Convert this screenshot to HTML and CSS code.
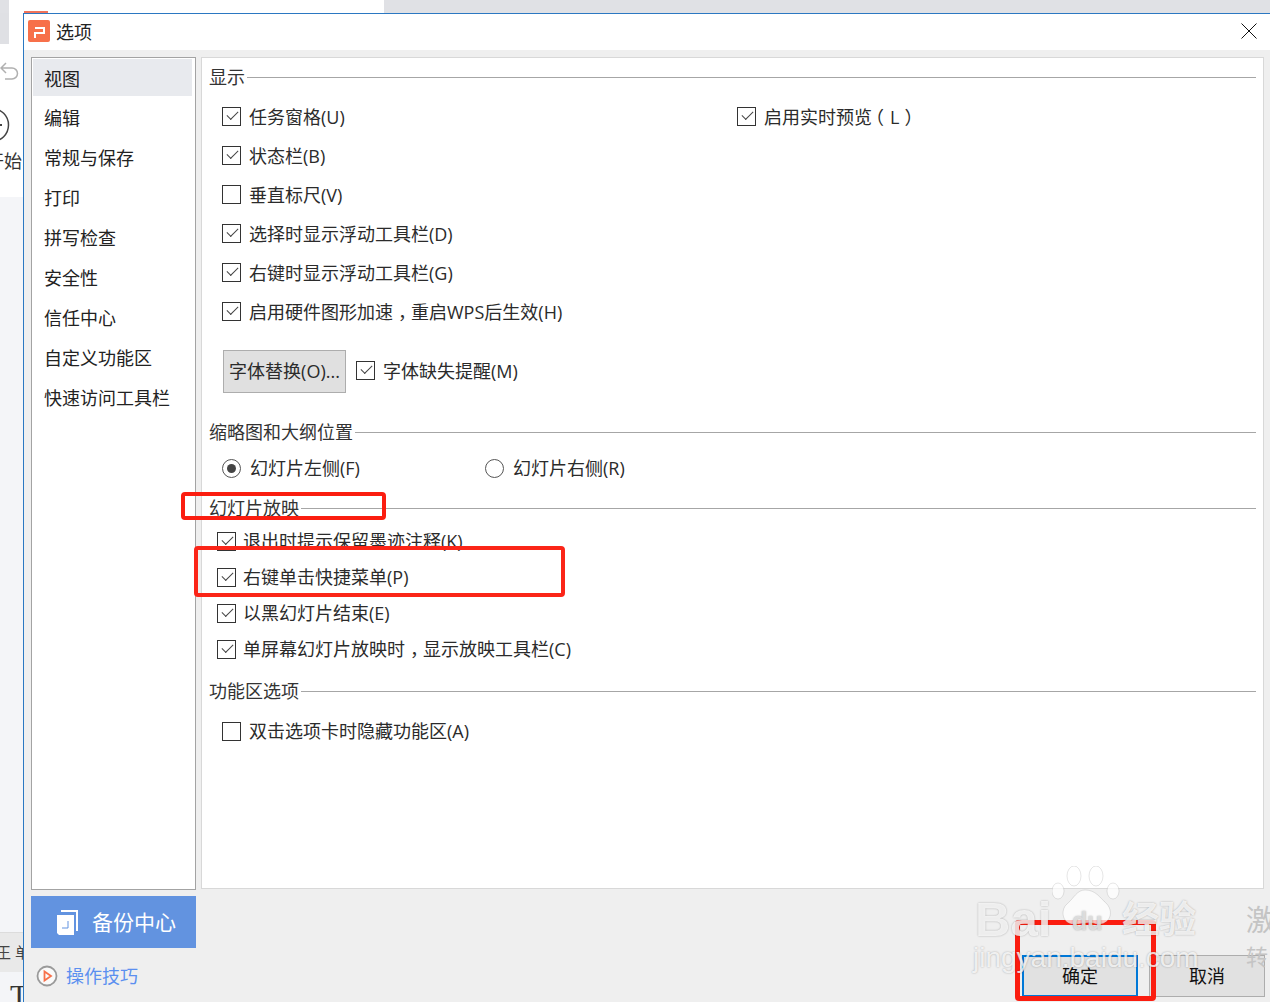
FILE: index.html
```html
<!DOCTYPE html>
<html lang="zh">
<head>
<meta charset="utf-8">
<title>选项</title>
<link rel="stylesheet" href="styles.css">
</head>
<body>
<div class="app">
  <div class="app-top"><span class="app-grey"></span><span class="app-tab"><i class="app-tab-mark"></i></span><span class="app-white"></span></div>
  <div class="app-page"></div>
  <svg class="undo" width="20" height="22" viewBox="0 0 20 22"><path d="M6 2 1 7l5 5M1 7h11a5.500 5.500 0 0 1 0 11H5" fill="none" stroke="#b0b0b0" stroke-width="1.500"/></svg>
  <svg class="play-ring" width="12" height="34" viewBox="0 0 12 34"><circle cx="-8" cy="17" r="16.500" fill="none" stroke="#444" stroke-width="1.500"/><rect x="0" y="16" width="2" height="2" fill="#444"/></svg>
  <div class="start">开始</div>
  <div class="app-band"></div>
  <div class="app-tools">王 单</div>
  <div class="app-t">T</div>
</div>

<section class="dialog">
  <header class="titlebar">
    <svg class="logo" width="22" height="22" viewBox="0 0 22 22"><rect width="22" height="22" rx="2" fill="#f7704a"/><path d="M7 8h9v5H7v5" fill="none" stroke="#fff" stroke-width="2"/></svg>
    <span class="title">选项</span>
    <svg class="close" width="16" height="16" viewBox="0 0 16 16"><path d="M.5.500l15 15M15.500.500l-15 15" stroke="#111" stroke-width="1"/></svg>
  </header>
  <div class="body">
    <aside class="side">
      <nav class="nav">
        <div class="nav-item active">视图</div>
        <div class="nav-item">编辑</div>
        <div class="nav-item">常规与保存</div>
        <div class="nav-item">打印</div>
        <div class="nav-item">拼写检查</div>
        <div class="nav-item">安全性</div>
        <div class="nav-item">信任中心</div>
        <div class="nav-item">自定义功能区</div>
        <div class="nav-item">快速访问工具栏</div>
      </nav>
      <div class="backup">
        <svg width="22" height="26" viewBox="0 0 22 26"><path d="M4 1h17v21h-2V3H4z" fill="#fff"/><path d="M0 6h17v20H2l-2-2z" fill="#fff"/><path d="M11 12v7H5" fill="none" stroke="#6293e0" stroke-width="1"/></svg>
        <span class="backup-text">备份中心</span>
      </div>
      <div class="tips">
        <svg width="22" height="22" viewBox="0 0 22 22"><circle cx="11" cy="11" r="9.500" fill="#fafafa" stroke="#9a9a9a" stroke-width="1.800"/><path d="M8.500 6.500 15 11l-6.500 4.500z" fill="none" stroke="#f7704a" stroke-width="1.800"/></svg>
        <span>操作技巧</span>
      </div>
    </aside>
    <main class="panel">
      <div class="legend legend-first"><span>显示</span></div>
      <div class="columns">
        <div class="col-main">
          <label class="row"><i class="box on"></i>任务窗格(U)</label>
          <label class="row"><i class="box on"></i>状态栏(B)</label>
          <label class="row"><i class="box"></i>垂直标尺(V)</label>
          <label class="row"><i class="box on"></i>选择时显示浮动工具栏(D)</label>
          <label class="row"><i class="box on"></i>右键时显示浮动工具栏(G)</label>
          <label class="row"><i class="box on"></i><span>启用硬件图形加速<span class="comma">，</span>重启WPS后生效(H)</span></label>
        </div>
        <div class="col-side">
          <label class="row"><i class="box on"></i><span>启用实时预览<span class="par-l">（</span><span class="par-m">L</span><span class="par-r">）</span></span></label>
        </div>
      </div>
      <div class="font-row">
        <button class="font-btn">字体替换(O)...</button>
        <label class="row"><i class="box on"></i>字体缺失提醒(M)</label>
      </div>
      <div class="legend legend-thumb"><span>缩略图和大纲位置</span></div>
      <div class="radios">
        <label class="radio"><i class="dot on"></i>幻灯片左侧(F)</label>
        <label class="radio"><i class="dot"></i>幻灯片右侧(R)</label>
      </div>
      <div class="legend legend-show"><span>幻灯片放映</span></div>
      <div class="show-list">
        <label class="row tight"><i class="box on"></i>退出时提示保留墨迹注释(K)</label>
        <label class="row tight"><i class="box on"></i>右键单击快捷菜单(P)</label>
        <label class="row tight"><i class="box on"></i>以黑幻灯片结束(E)</label>
        <label class="row tight"><i class="box on"></i><span>单屏幕幻灯片放映时<span class="comma">，</span>显示放映工具栏(C)</span></label>
      </div>
      <div class="legend legend-ribbon"><span>功能区选项</span></div>
      <label class="row ribbon-row"><i class="box"></i>双击选项卡时隐藏功能区(A)</label>
    </main>
  </div>
  <footer class="actions">
    <button class="action ok">确定</button>
    <button class="action">取消</button>
  </footer>
</section>

<div class="mark mark-a"></div>
<div class="mark mark-b"></div>
<div class="mark mark-c"></div>

<div class="wm">
  <svg class="wm-paw" width="68" height="64" viewBox="0 0 68 64"><g fill="#fff" fill-opacity=".72" stroke="#000" stroke-opacity=".1"><ellipse cx="6" cy="25" rx="6" ry="8"/><ellipse cx="22" cy="10" rx="7" ry="10"/><ellipse cx="44" cy="10" rx="7" ry="10"/><ellipse cx="61" cy="25" rx="6" ry="8"/><path d="M33 24c-8 0-11 8-18 14-7 6-5 21 8 20 7 0 14-3 21 0 12 2 19-10 11-20-7-6-11-14-22-14z"/></g></svg>
  <div class="wm-ba">Bai</div>
  <div class="wm-du">du</div>
  <div class="wm-cn">经验</div>
  <div class="wm-url">jingyan.baidu.com</div>
</div>
<div class="wm-side">激<br><span>转</span></div>
</body>
</html>
```
FILE: styles.css
```css
* { box-sizing: border-box; }
html, body { margin: 0; height: 100%; }
body {
  position: relative;
  width: 1270px;
  height: 1002px;
  overflow: hidden;
  background: #f4f5f8;
  font-family: "Open Sans", "Noto Sans CJK SC", sans-serif;
  font-size: 18px;
  color: #2b2b2b;
}

/* application behind the dialog */
.app { position: absolute; inset: 0; }
.app-top { display: flex; height: 13px; background: #e0e1e5; }
.app-grey { width: 9px; }
.app-tab { position: relative; width: 375px; background: #fff; }
.app-tab-mark { position: absolute; left: 15px; top: 11px; width: 24px; height: 2px; background: #f0735a; }
.app-white { flex: 1; }
.app-page { display: flex; height: 184px; background: #fff; }
.app::before {
  content: "";
  position: absolute;
  left: 0; top: 13px;
  width: 9px; height: 31px;
  background: #dfe0e4;
  z-index: 1;
}
.undo { position: absolute; left: 0; top: 61px; z-index: 1; }
.play-ring { position: absolute; left: 0; top: 108px; z-index: 1; }
.start { position: absolute; left: -14px; top: 148px; z-index: 1; font-size: 18px; line-height: 26px; color: #333; }
.app-band {
  position: absolute; left: 0; top: 932px; width: 23px; height: 40px;
  background: #e9e9e9; border-top: 1px solid #dcdcdc;
}
.app-tools { position: absolute; left: -4px; top: 940px; font-size: 15px; line-height: 24px; color: #444; }
.app-t { position: absolute; left: 10px; top: 978px; font-family: "Liberation Serif", serif; font-size: 30px; line-height: 34px; color: #333; }

/* dialog */
.dialog {
  position: absolute;
  left: 23px; top: 13px;
  width: 1247px; height: 989px;
  display: flex;
  flex-direction: column;
  background: #efefef;
  border: 1px solid #2b78c2;
  border-width: 1px 0 0 1px;
}
.titlebar {
  flex: none;
  height: 36px;
  display: flex;
  align-items: center;
  gap: 6px;
  padding-left: 4px;
  background: #fff;
}
.logo { flex: none; margin-top: -2px; }
.title { font-size: 18px; line-height: 26px; color: #222; }
.close { margin-left: auto; margin-right: 13px; margin-top: -2px; }

.body { flex: none; display: flex; padding: 7px 0 0 7px; gap: 5px; }
.side { flex: none; width: 165px; display: flex; flex-direction: column; }
.nav {
  height: 833px;
  padding: 1px 3px 0 1px;
  background: #fff;
  border: 1px solid #a3a3a3;
}
.nav-item {
  height: 40px;
  padding-left: 11px;
  font-size: 18px;
  line-height: 40px;
  color: #222;
}
.nav-item.active { height: 37px; line-height: 41px; margin-bottom: 2px; background: #e8eaee; }
.backup {
  margin-top: 6px;
  height: 52px;
  display: flex;
  align-items: center;
  gap: 13px;
  padding-left: 26px;
  background: #6293e0;
  color: #fff;
  font-size: 21px;
}
.backup-text { margin-bottom: 2px; }
.tips {
  margin-top: 15px;
  padding-left: 5px;
  display: flex;
  align-items: center;
  gap: 8px;
  color: #5b8ff0;
  font-size: 18px;
  line-height: 26px;
}

.panel {
  width: 1063px;
  height: 832px;
  padding: 6px 7px 0 7px;
  background: #fff;
  border: 1px solid #d8d8d8;
}
.legend { display: flex; align-items: center; height: 26px; gap: 2px; color: #333; }
.legend span { flex: none; line-height: 26px; }
.legend::after { content: ""; flex: 1; height: 1px; background: #a6a6a6; }
.columns { display: flex; margin-top: 7px; }
.col-main { width: 515px; padding-left: 13px; }
.col-side { flex: 1; padding-left: 13px; }
.row {
  display: flex;
  align-items: center;
  height: 39px;
  gap: 8px;
  line-height: 26px;
  color: #2b2b2b;
  white-space: nowrap;
}
.comma { display: inline-block; transform: translateX(5px); }
.par-l { display: inline-block; transform: translateX(-6px); }
.par-m { display: inline-block; }
.par-r { display: inline-block; transform: translateX(5px); }
.box {
  flex: none;
  position: relative;
  width: 19px;
  height: 19px;
  background: #fff;
  border: 1px solid #333;
}
.box.on::after {
  content: "";
  position: absolute;
  left: 4px; top: 3px;
  width: 10px; height: 5px;
  border-left: 1.500px solid #444;
  border-bottom: 1.500px solid #444;
  transform: rotate(-45deg);
}
.font-row { display: flex; align-items: center; gap: 10px; margin-top: 19px; padding-left: 14px; height: 43px; }
.font-row .row { margin-bottom: 2px; }
.font-btn {
  width: 123px;
  height: 43px;
  padding: 0 0 3px;
  font: inherit;
  color: #2b2b2b;
  background: #e0e0e0;
  border: 1px solid #adadad;
}
.legend-thumb { margin-top: 26px; }
.radios { display: flex; padding-left: 13px; margin-top: 5px; height: 36px; align-items: center; }
.radio { display: flex; align-items: center; gap: 9px; width: 263px; line-height: 26px; }
.dot {
  flex: none;
  position: relative;
  width: 19px; height: 19px;
  border: 1px solid #555;
  border-radius: 50%;
  background: #fff;
}
.dot.on::after {
  content: "";
  position: absolute;
  left: 4px; top: 4px;
  width: 9px; height: 9px;
  border-radius: 50%;
  background: #444;
}
.legend-show { margin-top: 9px; }
.show-list { padding: 2px 0 0 8px; }
.row.tight { height: 36px; gap: 7px; }
.legend-ribbon { margin-top: 11px; }
.ribbon-row { margin: 7px 0 0 13px; height: 40px; }

.actions {
  display: flex;
  gap: 11px;
  position: absolute;
  left: 998px; top: 941px;
}
.action {
  width: 116px;
  height: 42px;
  padding: 0 0 2px;
  font: inherit;
  color: #111;
  background: #e1e1e1;
  border: 1px solid #adadad;
}
.action.ok { border: 2px solid #0078d7; }

/* red annotations */
.mark {
  position: absolute;
  border: 4px solid #fb1d10;
  border-radius: 4px;
  pointer-events: none;
}
.mark-a { left: 181px; top: 492px; width: 205px; height: 28px; }
.mark-b { left: 194px; top: 546px; width: 371px; height: 51px; border-color: #fb2518; }
.mark-c { left: 1015px; top: 920px; width: 141px; height: 81px; border-width: 5px; }

/* watermark */
.wm {
  position: absolute;
  left: 972px; top: 866px;
  width: 240px; height: 136px;
  color: rgba(255, 255, 255, .8);
  text-shadow: 0 0 2px rgba(0, 0, 0, .3);
  pointer-events: none;
}
.wm-paw { position: absolute; left: 80px; top: 0; }
.wm-ba {
  position: absolute;
  left: 3px; top: 23px;
  font-family: "Liberation Sans", sans-serif;
  font-weight: 700;
  font-size: 49px;
  line-height: 60px;
}
.wm-du {
  position: absolute;
  left: 100px; top: 40px;
  font-family: "Liberation Sans", sans-serif;
  font-weight: 700;
  font-size: 25px;
  line-height: 30px;
  color: rgba(225, 225, 225, .9);
}
.wm-cn {
  position: absolute;
  left: 150px; top: 26px;
  font-family: "Noto Sans CJK SC", sans-serif;
  font-weight: 700;
  font-size: 37px;
  line-height: 50px;
}
.wm-url {
  position: absolute;
  left: 1px; top: 76px;
  font-family: "Liberation Sans", sans-serif;
  font-size: 28px;
  line-height: 32px;
  white-space: nowrap;
}
.wm-side {
  position: absolute;
  left: 1246px; top: 903px;
  font-size: 29px;
  line-height: 34px;
  color: #c4c4c4;
  pointer-events: none;
}
.wm-side span { font-size: 22px; }
```
